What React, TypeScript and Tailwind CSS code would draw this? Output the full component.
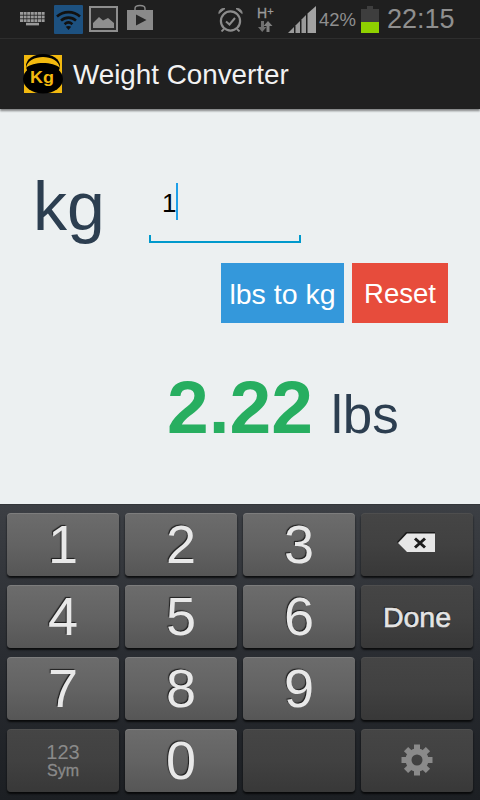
import React from "react";

const sans = "font-['Liberation_Sans',Arial,sans-serif]";

const lightKey =
    "bg-gradient-to-b from-[#6c6c6c] via-[#636363] to-[#565656] shadow-[0_2px_2px_rgba(0,0,0,0.75),inset_0_1px_0_rgba(255,255,255,0.12)]";
const darkKey =
    "bg-gradient-to-b from-[#454545] via-[#414141] to-[#383838] shadow-[0_2px_2px_rgba(0,0,0,0.75),inset_0_1px_0_rgba(255,255,255,0.05)]";

function KeyboardIcon() {
    return (
        <svg width="26" height="16" viewBox="0 0 26 16" fill="#9a9a9a">
            {[0, 1, 2, 3, 4, 5, 6].map((i) => (
                <rect key={`a${i}`} x={i * 3.6} y="0" width="3" height="2.8" />
            ))}
            {[0, 1, 2, 3, 4, 5, 6].map((i) => (
                <rect key={`b${i}`} x={i * 3.6} y="3.6" width="3" height="2.8" />
            ))}
            {[0, 1, 2, 3, 4, 5, 6].map((i) => (
                <rect key={`c${i}`} x={i * 3.6} y="7.2" width="3" height="2.8" />
            ))}
            <rect x="6" y="10.8" width="13" height="2.6" />
        </svg>
    );
}

function WifiIcon() {
    return (
        <div className="w-[29px] h-[29px] bg-[#1d5180] rounded-[1px] flex items-center justify-center">
            <svg width="25" height="25" viewBox="0 0 25 25" fill="none" stroke="#111" strokeWidth="2.6">
                <path d="M1 9.5C7.5 3.6 17.5 3.6 24 9.5" />
                <path d="M5 13.6C9.5 9.6 15.5 9.6 20 13.6" />
                <path d="M8.6 17.2C11 15 14 15 16.4 17.2" />
                <path d="M12.5 23L9.8 19.8C11.4 18.6 13.6 18.6 15.2 19.8Z" fill="#111" stroke="none" />
            </svg>
        </div>
    );
}

function ImageIcon() {
    return (
        <svg width="29" height="26" viewBox="0 0 29 26">
            <rect x="1" y="1" width="27" height="24" fill="#2c2c2c" stroke="#8e8e8e" strokeWidth="2" />
            <path d="M4 22V17L10 11L14 14.5L19 12L25 17V22Z" fill="#8e8e8e" />
        </svg>
    );
}

function StoreIcon() {
    return (
        <svg width="26" height="27" viewBox="0 0 26 27">
            <path d="M8 6V4.5C8 0.5 18 0.5 18 4.5V6" fill="none" stroke="#8a8a8a" strokeWidth="1.4" />
            <path d="M0 6H26V26H0Z" fill="#8a8a8a" />
            <path d="M9 10.5L19.5 16L9 21.5Z" fill="#262626" />
        </svg>
    );
}

function AlarmIcon() {
    return (
        <svg width="25" height="25" viewBox="0 0 25 25" fill="none" stroke="#8c8c8c">
            <circle cx="12.5" cy="14" r="9.6" strokeWidth="2.2" />
            <path d="M8 14.5L11.5 17.5L17 11" strokeWidth="2" />
            <path d="M0.8 6.5C1 2.8 4 1 7 1.6Z" fill="#8c8c8c" strokeWidth="1" />
            <path d="M24.2 6.5C24 2.8 21 1 18 1.6Z" fill="#8c8c8c" strokeWidth="1" />
            <path d="M6 22L3.5 24.5M19 22L21.5 24.5" strokeWidth="1.8" />
        </svg>
    );
}

function NetworkIcon() {
    return (
        <div className="w-[18px] flex flex-col items-start">
            <span className={`${sans} text-[14px] leading-[13px] text-[#9a9a9a] [-webkit-text-stroke:0.3px_#9a9a9a] whitespace-nowrap`}>
                H<span className="text-[11px] align-top leading-[9px]">+</span>
            </span>
            <svg width="16" height="11" viewBox="0 0 16 11" fill="#6e6e6e" className="mt-[1px]">
                <path d="M4 0H7V6H9.5L5.2 11L1 6H4Z" />
                <path d="M9.5 11H12.5V5H15.5L11 0L6.5 5H9.5Z" fill="#7e7e7e" />
            </svg>
        </div>
    );
}

function SignalIcon() {
    return (
        <svg width="28" height="27" viewBox="0 0 28 27" fill="#9a9a9a">
            <path d="M0 27L6 21V27Z" />
            <path d="M7.5 19.5L12 15V27H7.5Z" />
            <path d="M13.5 13.5L18 9V27H13.5Z" />
            <path d="M19.5 7.5L28 0V27H19.5Z" fill="#a2a2a2" />
        </svg>
    );
}

function BatteryIcon() {
    return (
        <div className="w-[18px] h-[27px] flex flex-col items-center">
            <div className="w-[6px] h-[3px] bg-[#3e3e3e]" />
            <div className="w-full flex-1 bg-[#3e3e3e] flex flex-col justify-end">
                <div className="h-[11px] bg-[#8fd100]" />
            </div>
        </div>
    );
}

function StatusBar() {
    return (
        <div className={`${sans} h-[39px] shrink-0 bg-[#1f1f1f] border-b border-[#2e2e2e] flex items-center text-[#8f8f8f]`}>
            <div className="ml-[20px] mt-[2px] w-[26px]">
                <KeyboardIcon />
            </div>
            <div className="ml-[8px]">
                <WifiIcon />
            </div>
            <div className="ml-[6px]">
                <ImageIcon />
            </div>
            <div className="ml-[9px] -mt-[3px]">
                <StoreIcon />
            </div>
            <div className="ml-[65px] mt-[1px]">
                <AlarmIcon />
            </div>
            <div className="ml-[14px] mt-[1px]">
                <NetworkIcon />
            </div>
            <div className="ml-[13px]">
                <SignalIcon />
            </div>
            <span className="ml-[3px] text-[18.5px] leading-none mt-[2px]">42%</span>
            <div className="ml-[5px]">
                <BatteryIcon />
            </div>
            <span className="ml-[8px] text-[27px] leading-none">22:15</span>
        </div>
    );
}

function ActionBar() {
    return (
        <div className={`${sans} h-[70px] shrink-0 bg-[#202020] flex items-center pl-[23px] shadow-[0_2px_2px_rgba(0,0,0,0.45)] relative`}>
            <svg width="40" height="40" viewBox="0 0 40 40">
                <rect x="1" y="1" width="38" height="38" fill="#f2b90f" />
                <ellipse cx="20" cy="12" rx="17" ry="12" fill="#000" />
                <ellipse cx="20" cy="25" rx="20" ry="14.5" fill="#000" />
                <path d="M3 14C5 -0.7 35 -0.7 37 14C30 7.3 10 7.3 3 14Z" fill="#f2b90f" />
                <text x="7" y="29" fontSize="16" fontWeight="700" fill="#f2b90f" fontFamily="Liberation Sans" textLength="24" lengthAdjust="spacingAndGlyphs">
                    Kg
                </text>
            </svg>
            <span className="ml-[10px] mt-[2px] text-[27.8px] leading-none text-[#f2f2f2]">Weight Converter</span>
        </div>
    );
}

function Converter() {
    return (
        <main className={`${sans} flex-1 bg-[#ecf0f1] flex flex-col`}>
            <div className="flex items-start pl-[33px] pt-[59px] h-[154px]">
                <span className="w-[72px] text-[68px] leading-[76px] text-[#2c3e50]">kg</span>
                <div className="ml-[44px] mt-[13px] w-[152px] h-[62px] relative flex items-start pl-[13px] border-b-2 border-[#0099cc]">
                    <span className="text-[26px] leading-[38px] text-black mt-[3px]">1</span>
                    <span className="w-[2px] h-[37px] bg-[#1e9fe8] mt-[2px]" />
                    <span className="absolute left-0 bottom-0 w-[2px] h-[6px] bg-[#0099cc]" />
                    <span className="absolute right-0 bottom-0 w-[2px] h-[6px] bg-[#0099cc]" />
                </div>
            </div>
            <div className="flex justify-end gap-[8px] pr-[32px]">
                <button className="w-[123px] h-[60px] bg-[#3498db] text-white text-[28.5px] pt-[2px]">lbs to kg</button>
                <button className="w-[96px] h-[60px] bg-[#e74c3c] text-white text-[27.5px] pt-[2px]">Reset</button>
            </div>
            <div className="flex items-baseline pl-[167px] mt-[40px]">
                <span className="text-[75px] leading-[88px] font-bold text-[#27ae60]">2.22</span>
                <span className="ml-[18px] text-[53px] leading-none text-[#2c3e50]">lbs</span>
            </div>
        </main>
    );
}

function Digit({ value }: { value: string }) {
    return (
        <button className={`${lightKey} rounded-[4px] text-[54px] leading-none text-[#e8e8e8] pb-[2px] [text-shadow:-1px_-1px_1px_rgba(0,0,0,0.7)]`}>
            {value}
        </button>
    );
}

function GearIcon() {
    return (
        <svg width="32" height="32" viewBox="0 0 32 32" className="-mt-[1px]">
            <circle cx="16" cy="16" r="8.5" fill="none" stroke="#8a8a8a" strokeWidth="6" />
            {[0, 45, 90, 135, 180, 225, 270, 315].map((deg) => (
                <rect key={deg} x="13" y="0.5" width="6" height="7" fill="#8a8a8a" transform={`rotate(${deg} 16 16)`} />
            ))}
        </svg>
    );
}

function Keyboard() {
    return (
        <div className={`${sans} h-[296px] shrink-0 bg-gradient-to-b from-[#3c3f44] via-[#2a2d32] to-[#1c1f23] border-t border-[#33363a] grid grid-cols-[repeat(4,112px)] auto-rows-[63px] gap-x-[6px] gap-y-[9px] pl-[7px] pt-[8px]`}>
            <Digit value="1" />
            <Digit value="2" />
            <Digit value="3" />
            <button className={`${darkKey} rounded-[4px] flex items-center justify-center`}>
                <svg width="40" height="22" viewBox="0 0 40 22" className="-mt-[5px] -ml-[2px]">
                    <path d="M1 11L10 1H39V20H10Z" fill="#000" opacity="0.6" />
                    <path d="M2 12L11 2.5H39V21H11Z" fill="#e6e6e6" />
                    <path d="M19 7.5L29 16.5M29 7.5L19 16.5" stroke="#1c1c1c" strokeWidth="3" />
                </svg>
            </button>
            <Digit value="4" />
            <Digit value="5" />
            <Digit value="6" />
            <button className={`${darkKey} rounded-[4px] text-[28.5px] pt-[2px] text-[#e4e4e4] [-webkit-text-stroke:0.6px_#e4e4e4] [text-shadow:-1px_-1px_1px_rgba(0,0,0,0.7)]`}>
                Done
            </button>
            <Digit value="7" />
            <Digit value="8" />
            <Digit value="9" />
            <div className={`${darkKey} rounded-[4px]`} />
            <button className={`${darkKey} rounded-[4px] flex flex-col items-center justify-center text-[#8a8a8a]`}>
                <span className="text-[20px] leading-[20px]">123</span>
                <span className="text-[16px] leading-[17px] [-webkit-text-stroke:0.3px_#8a8a8a]">Sym</span>
            </button>
            <Digit value="0" />
            <div className={`${darkKey} rounded-[4px]`} />
            <button className={`${darkKey} rounded-[4px] flex items-center justify-center`}>
                <GearIcon />
            </button>
        </div>
    );
}

export default function App() {
    return (
        <div className="w-[480px] h-[800px] flex flex-col overflow-hidden">
            <StatusBar />
            <ActionBar />
            <Converter />
            <Keyboard />
        </div>
    );
}
